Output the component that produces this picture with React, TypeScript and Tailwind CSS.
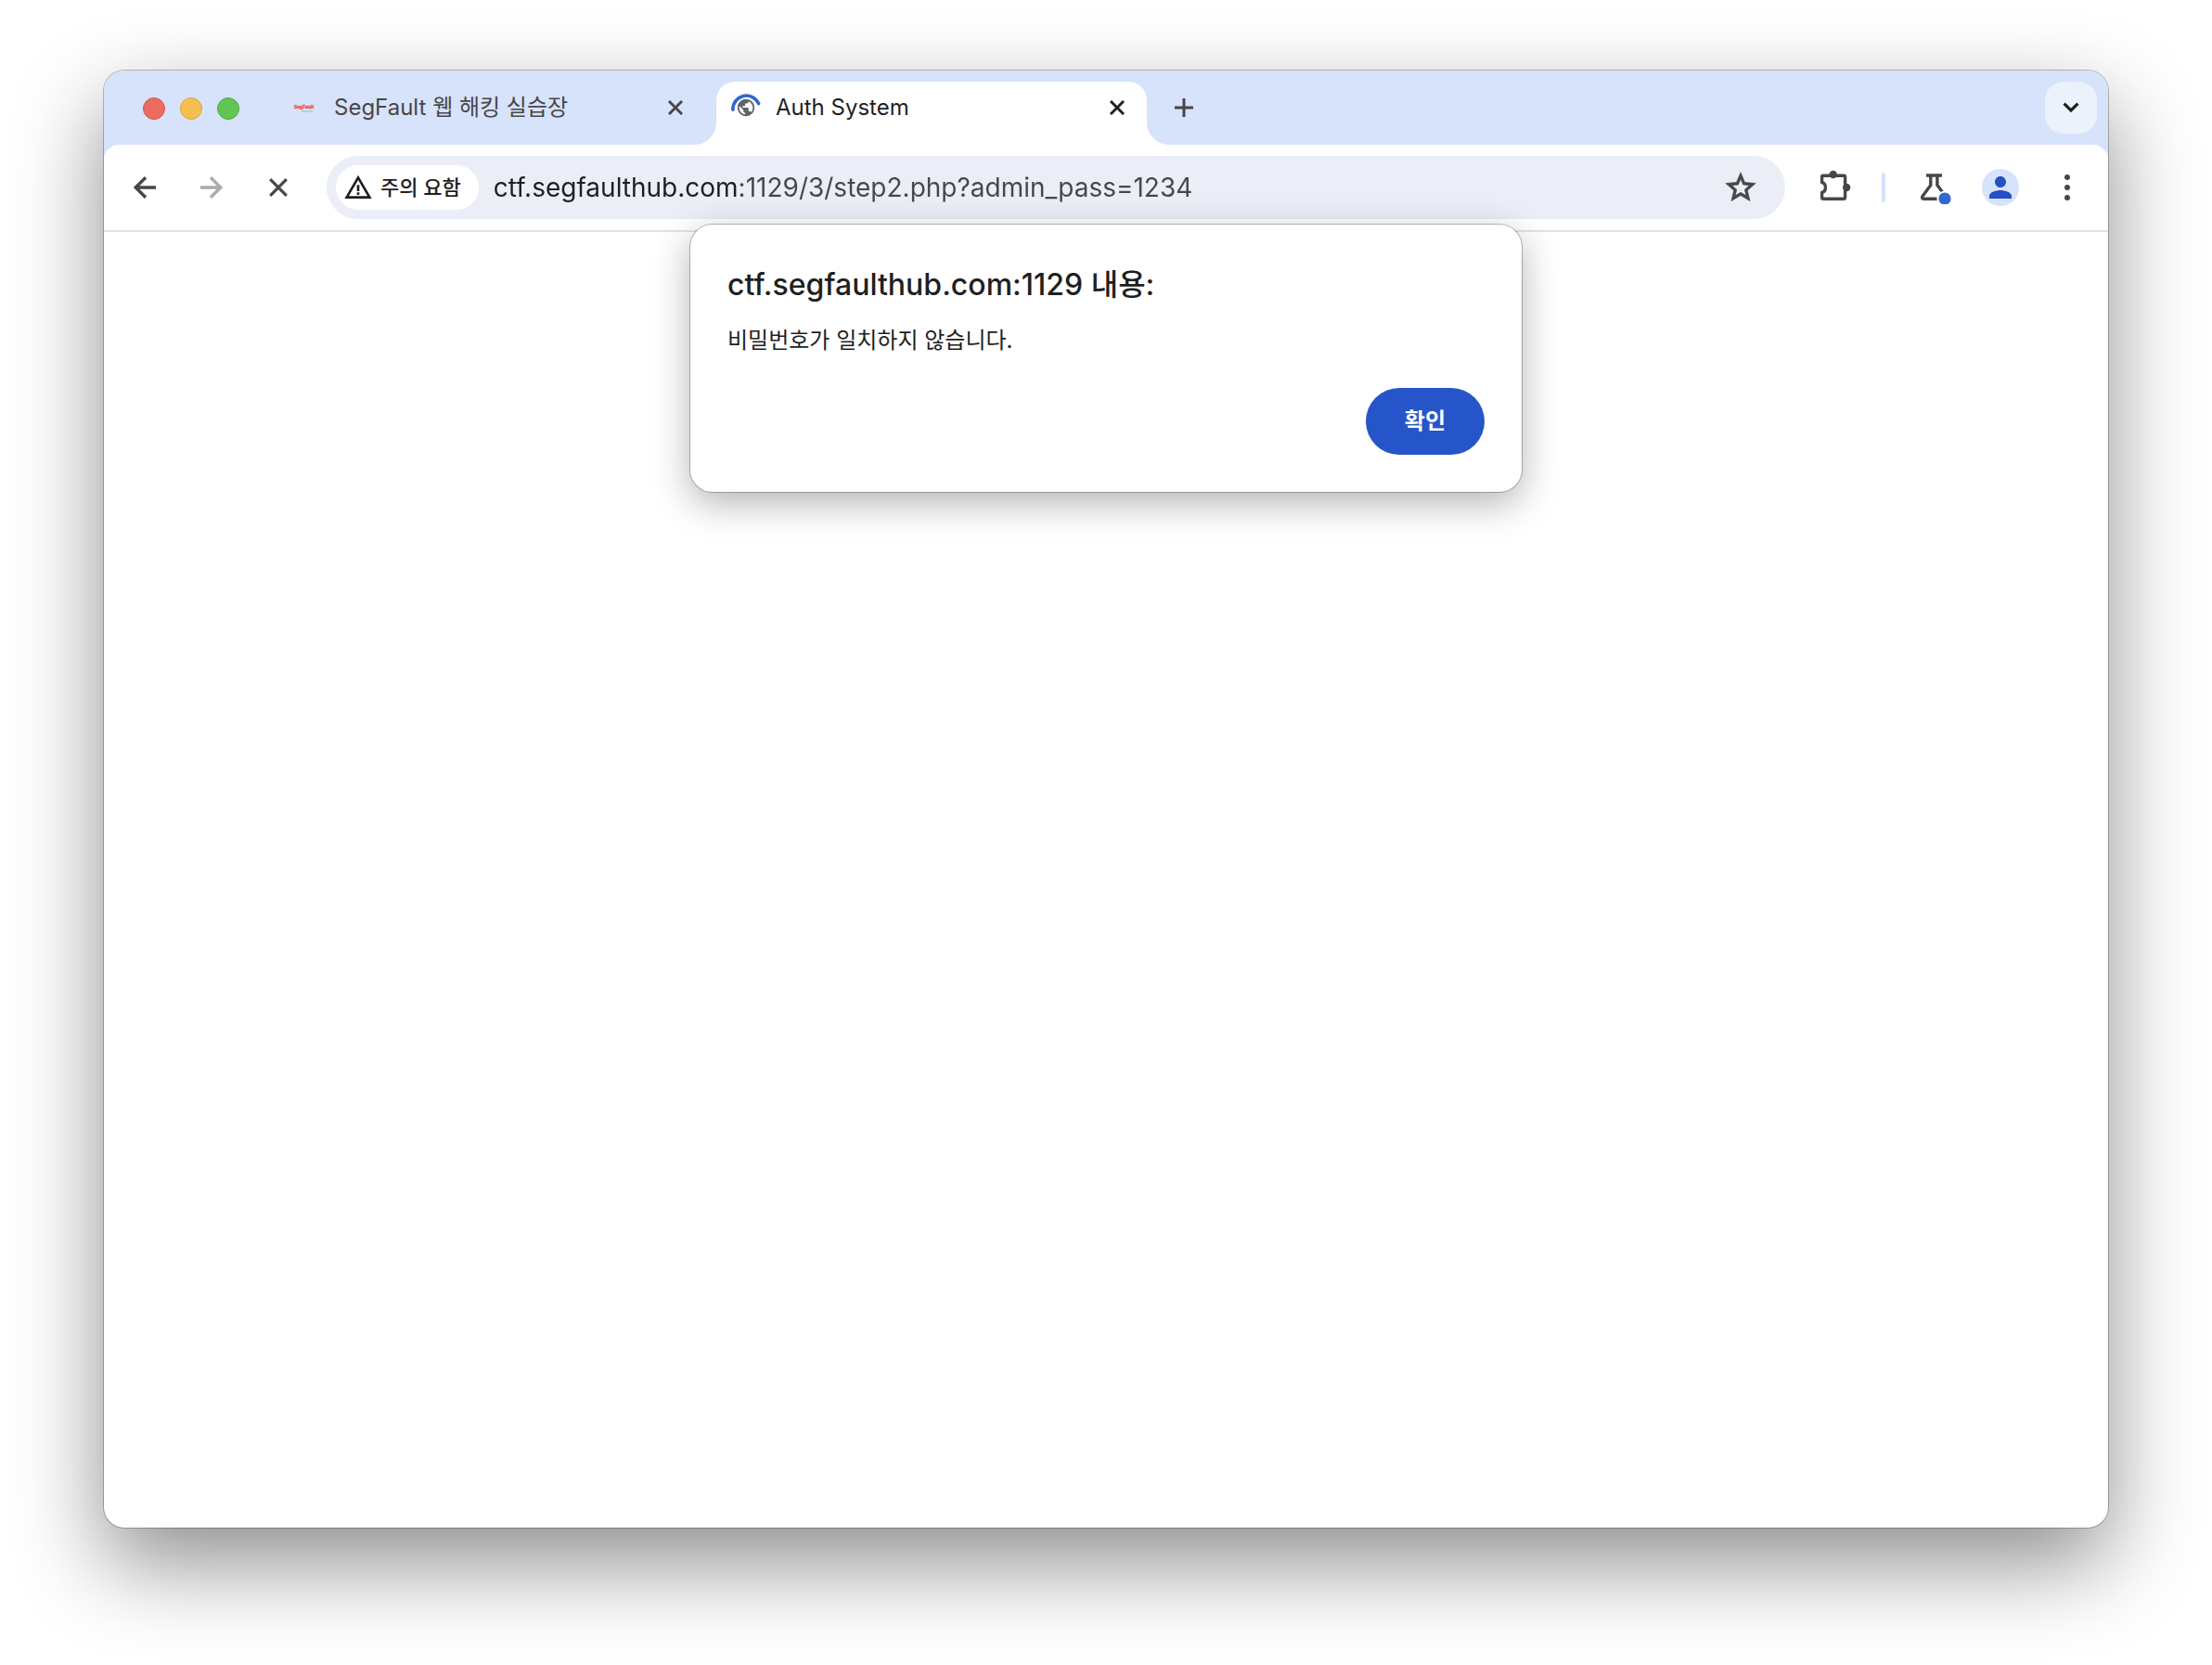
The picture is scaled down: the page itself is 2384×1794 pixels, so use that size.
import React, { useState } from 'react';
import { MdPerson, MdPublic, MdWarningAmber } from 'react-icons/md';

const tabs = [
  { id: 'ctf', title: 'SegFault 웹 해킹 실습장', active: false },
  { id: 'auth', title: 'Auth System', active: true },
];

function SegFaultIcon() {
  return (
    <svg width="32" height="32" viewBox="0 0 32 32" aria-hidden="true">
      <text x="5" y="17" fontSize="5" fontWeight="700" fill="#e8604f" stroke="#e8604f" strokeWidth="0.4" fontFamily="Liberation Sans, sans-serif">
        SegFault
      </text>
      <path d="M13 20h12" stroke="#b9cbe0" strokeWidth="2" />
    </svg>
  );
}

function LoadingIcon() {
  return (
    <span className="relative flex size-8 items-center justify-center">
      <MdPublic size={22} color="#5f6368" />
      <svg className="absolute inset-0" width="32" height="32" viewBox="0 0 32 32" fill="none" aria-hidden="true">
        <path d="M1.9 18.2A14.5 14.5 0 0 1 29.6 11.6" stroke="#3367d1" strokeWidth="3.6" strokeLinecap="round" />
      </svg>
    </span>
  );
}

function CrossIcon({ size, strokeWidth }: { size: number; strokeWidth: number }) {
  return (
    <svg width={size} height={size} viewBox="0 0 20 20" fill="none" stroke="currentColor" strokeWidth={strokeWidth} aria-hidden="true">
      <path d="M1.2 1.2l17.6 17.6M18.8 1.2L1.2 18.8" />
    </svg>
  );
}

function ArrowIcon({ flipped = false }: { flipped?: boolean }) {
  return (
    <svg width="24" height="24" viewBox="0 0 24 24" fill="none" stroke="currentColor" strokeWidth="3.4" aria-hidden="true">
      <path d={flipped ? 'M0 12h21.5M11 1.2L21.8 12 11 22.8' : 'M24 12H2.5M13 1.2L2.2 12 13 22.8'} />
    </svg>
  );
}

function StarIcon() {
  return (
    <svg width="40" height="40" viewBox="0 0 24 24" fill="currentColor" stroke="currentColor" strokeWidth="0.4" aria-hidden="true">
      <path d="M21.7 9.3l-7-.6L12 2.300 9.300 8.700l-7 .6 5.300 4.600L6 20.700l6-3.600 6 3.600-1.600-6.800zM12 15.200l-3.500 2.100.95-4-3.100-2.700 4.100-.35L12 6.500l1.600 3.750 4.100.35-3.100 2.700.95 4z" fillRule="evenodd" />
    </svg>
  );
}

function PuzzleIcon() {
  return (
    <svg width="36" height="40" viewBox="0 0 36 40" fill="none" aria-hidden="true">
      <path
        d="M3.6 14.6V8.6q0-1.4 1.4-1.4H27.2q1.4 0 1.4 1.4V30.8q0 1.4-1.4 1.4H5q-1.4 0-1.4-1.4V25.4c2.4-.4 3.8-2.6 3.8-5.4s-1.4-5-3.8-5.4z"
        stroke="#474747"
        strokeWidth="3.4"
        strokeLinejoin="round"
      />
      <circle cx="15.7" cy="6" r="4.2" fill="#474747" />
      <circle cx="30.2" cy="20" r="4.2" fill="#474747" />
    </svg>
  );
}

function FlaskIcon() {
  return (
    <svg width="36" height="36" viewBox="0 0 36 36" fill="none" aria-hidden="true">
      <path
        d="M8 5h17M12.8 5v10.4L3.9 27.6c-.9 1.4-.2 2.7 1.4 2.7h22.2c1.6 0 2.3-1.3 1.4-2.7L19.9 15.4V5"
        stroke="#474747"
        strokeWidth="3.4"
      />
      <circle cx="28" cy="30" r="8.6" fill="#fff" />
      <circle cx="28" cy="30" r="6.6" fill="#3367d1" />
    </svg>
  );
}

function TabFlare({ className }: { className: string }) {
  return (
    <svg className={className} width="24" height="24" viewBox="0 0 24 24" aria-hidden="true">
      <path d="M24 0v24H0A24 24 0 0 0 24 0z" fill="#fff" />
    </svg>
  );
}

function TabStrip() {
  return (
    <div className="flex h-20 items-end bg-[#d7e2fb] pl-[42px] pr-3">
      <div className="mr-[38px] flex h-[68px] items-center gap-4 pb-[10px]">
        <button aria-label="닫기" className="size-6 rounded-full border border-[#d6554a] bg-[#ec6b5f]" />
        <button aria-label="최소화" className="size-6 rounded-full border border-[#d9a544] bg-[#f5bf4f]" />
        <button aria-label="최대화" className="size-6 rounded-full border border-[#50a73f] bg-[#61c554]" />
      </div>

      <div className="flex min-w-0 gap-3">
        {tabs.map((tab) => (
          <div
            key={tab.id}
            className={`relative flex h-[68px] w-[464px] items-center gap-4 pb-3 pl-4 pr-6 text-2xl ${
              tab.active ? 'rounded-t-[20px] bg-white text-[#1f1f1f]' : 'text-[#474747]'
            }`}
          >
            {tab.active && (
              <>
                <TabFlare className="absolute -left-6 bottom-0" />
                <TabFlare className="absolute -right-6 bottom-0 -scale-x-100" />
              </>
            )}
            {tab.active ? <LoadingIcon /> : <SegFaultIcon />}
            <span className="flex-1 truncate leading-8">{tab.title}</span>
            <button aria-label="탭 닫기">
              <CrossIcon size={16} strokeWidth={3.6} />
            </button>
          </div>
        ))}
      </div>

      <button aria-label="새 탭" className="mb-3 ml-[30px] flex h-14 items-center text-[#474747]">
        <svg width="20" height="20" viewBox="0 0 20 20" fill="none" stroke="currentColor" strokeWidth="3" aria-hidden="true">
          <path d="M10 0v20M0 10h20" />
        </svg>
      </button>

      <button aria-label="탭 검색" className="mb-3 ml-auto flex size-14 items-center justify-center rounded-[20px] bg-[#ebf2fc] text-[#1f1f1f]">
        <svg width="18" height="12" viewBox="0 0 18 12" fill="none" stroke="currentColor" strokeWidth="3.2" aria-hidden="true">
          <path d="M1.6 1.6L9 9l7.4-7.4" />
        </svg>
      </button>
    </div>
  );
}

function Toolbar() {
  const [url, setUrl] = useState('ctf.segfaulthub.com:1129/3/step2.php?admin_pass=1234');

  return (
    <div className="bg-[#d7e2fb]">
      <div className="flex h-[94px] items-center rounded-t-2xl border-b-2 border-[#e1e3e1] bg-white pl-8 pr-[41px] text-[#474747]">
        <button aria-label="뒤로">
          <ArrowIcon />
        </button>
        <button aria-label="앞으로" disabled className="ml-12 text-[#ababab]">
          <ArrowIcon flipped />
        </button>
        <button aria-label="로드 중지" className="ml-[50px] mr-[42px]">
          <CrossIcon size={20} strokeWidth={3.2} />
        </button>

        <div className="flex h-[68px] flex-1 items-center rounded-full bg-[#ebeef6] pl-[10px] pr-7">
          <button className="flex h-12 items-center gap-2 rounded-full bg-white pl-2 pr-[19px] text-[22px] font-medium text-[#1f1f1f]">
            <MdWarningAmber size={32} />
            주의 요함
          </button>
          <input
            type="text"
            aria-label="주소창"
            value={url}
            onChange={(e) => setUrl(e.target.value)}
            className="ml-4 min-w-0 flex-1 bg-[linear-gradient(90deg,#1f1f1f_264px,#474747_264px)] bg-clip-text text-[28px] leading-10 text-transparent outline-none"
          />
          <button aria-label="북마크">
            <StarIcon />
          </button>
        </div>

        <button aria-label="확장 프로그램" className="ml-9">
          <PuzzleIcon />
        </button>
        <div className="ml-8 h-8 w-1 rounded-full bg-[#d7e2fb]" />
        <button aria-label="실험실" className="ml-9">
          <FlaskIcon />
        </button>
        <button aria-label="프로필" className="ml-8 flex size-10 items-center justify-center rounded-full bg-[#d7e2fb] text-[#2350c4]">
          <MdPerson size={36} />
        </button>
        <button aria-label="메뉴" className="ml-[49px]">
          <svg width="6" height="28" viewBox="0 0 6 28" fill="currentColor" aria-hidden="true">
            <circle cx="3" cy="3" r="3" />
            <circle cx="3" cy="14" r="3" />
            <circle cx="3" cy="25" r="3" />
          </svg>
        </button>
      </div>
    </div>
  );
}

function AlertDialog({ onClose }: { onClose: () => void }) {
  return (
    <div
      role="alertdialog"
      aria-labelledby="alert-title"
      aria-describedby="alert-message"
      className="absolute inset-x-0 -top-2 mx-auto flex w-[896px] max-w-full flex-col rounded-3xl bg-white p-10 text-[#1f1f1f] shadow-[0_0_0_1px_rgba(0,0,0,0.25),0_12px_40px_rgba(0,0,0,0.3)]"
    >
      <h1 id="alert-title" className="text-[32px] font-medium leading-[50px]">
        ctf.segfaulthub.com:1129 내용:
      </h1>
      <p id="alert-message" className="mt-4 text-2xl leading-[38px]">
        비밀번호가 일치하지 않습니다.
      </p>
      <button onClick={onClose} className="mt-8 h-[72px] self-end rounded-full bg-[#2655c9] px-[42px] text-2xl font-bold text-white">
        확인
      </button>
    </div>
  );
}

export default function App() {
  const [alertOpen, setAlertOpen] = useState(true);

  return (
    <div className="flex min-h-screen bg-white px-28 pb-[148px] pt-[76px] font-['Inter','Noto_Sans_CJK_KR',sans-serif]">
      <div className="flex min-w-0 flex-1 flex-col overflow-hidden rounded-[22px] bg-white shadow-[0_0_0_1px_rgba(0,0,0,0.25),0_38px_96px_rgba(0,0,0,0.45)]">
        <TabStrip />
        <Toolbar />
        <main className="relative flex-1">{alertOpen && <AlertDialog onClose={() => setAlertOpen(false)} />}</main>
      </div>
    </div>
  );
}
